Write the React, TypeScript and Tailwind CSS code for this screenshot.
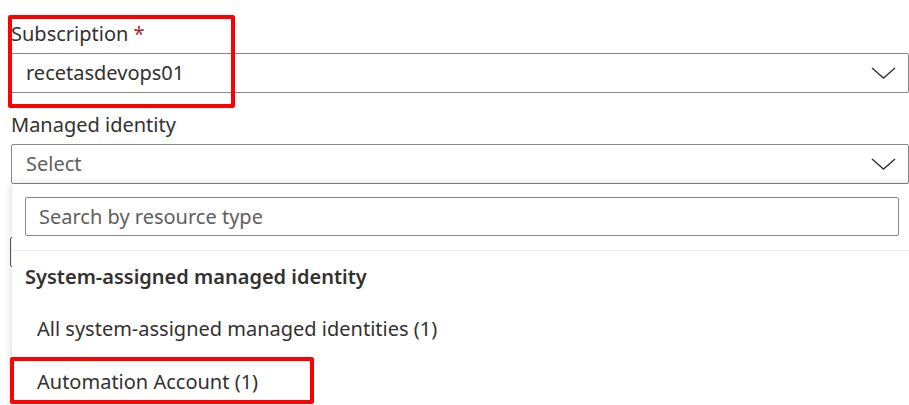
import React from "react";

const Chevron = () => (
  <svg width="25" height="12" viewBox="0 0 25 12" fill="none">
    <path d="M1 1 L12.5 11 L24 1" stroke="#323130" strokeWidth="1.4" />
  </svg>
);

const App = () => {
  return (
    <div
      className="relative w-[909px] h-[405px] overflow-hidden bg-white text-[#323130]"
      style={{ fontFamily: '"Noto Sans", "Open Sans", sans-serif' }}
    >
      <div className="pl-[11px] pt-[20px]">
        <div className="h-[28px] text-[20px] leading-[28px]">
          Subscription <span className="text-[#a4262c]">*</span>
        </div>
        <div className="mt-[5px] h-[40px] w-[898px] border border-[#8a8886] rounded-[2px] flex items-center justify-between pl-[14px] pr-[12px]">
          <span className="text-[20px]">recetasdevops01</span>
          <Chevron />
        </div>

        <div className="mt-[18px] h-[28px] text-[20px] leading-[28px]">
          Managed identity
        </div>
        <div className="mt-[5px] h-[40px] w-[898px] border border-[#8a8886] rounded-[2px] flex items-center justify-between pl-[14px] pr-[12px]">
          <span className="text-[20px] text-[#605e5c]">Select</span>
          <Chevron />
        </div>

        {/* field behind the open dropdown */}
        <div className="-ml-[1px] mt-[53px] h-[30px] w-[898px] border border-[#605e5c] rounded-[2px]" />
      </div>

      {/* dropdown panel */}
      <div className="absolute left-[12px] top-[184px] w-[910px] h-[240px] bg-white shadow-[0_0_8px_rgba(0,0,0,0.18)]">
        <div className="pt-[13px] pl-[13px] pr-[23px]">
          <div className="h-[39px] border border-[#8a8886] rounded-[2px] flex items-center pl-[13px] text-[20px] text-[#605e5c]">
            Search by resource type
          </div>
        </div>
        <div className="mt-[14px] border-t border-[#edebe9]" />
        <div className="h-[52px] flex items-center pl-[13px] text-[20px] font-semibold">
          System-assigned managed identity
        </div>
        <div className="h-[52px] flex items-center pl-[25px] text-[20px]">
          All system-assigned managed identities (1)
        </div>
        <div className="h-[54px] flex items-center pl-[25px] text-[20px]">
          Automation Account (1)
        </div>
      </div>

      {/* annotations */}
      <div className="absolute left-[8px] top-[15px] w-[227px] h-[93px] border-[4px] border-[#ff0000] rounded-[2px]" />
      <div className="absolute left-[10px] top-[357px] w-[304px] h-[47px] border-[4px] border-[#ff0000] rounded-[2px]" />
    </div>
  );
};

export default App;
